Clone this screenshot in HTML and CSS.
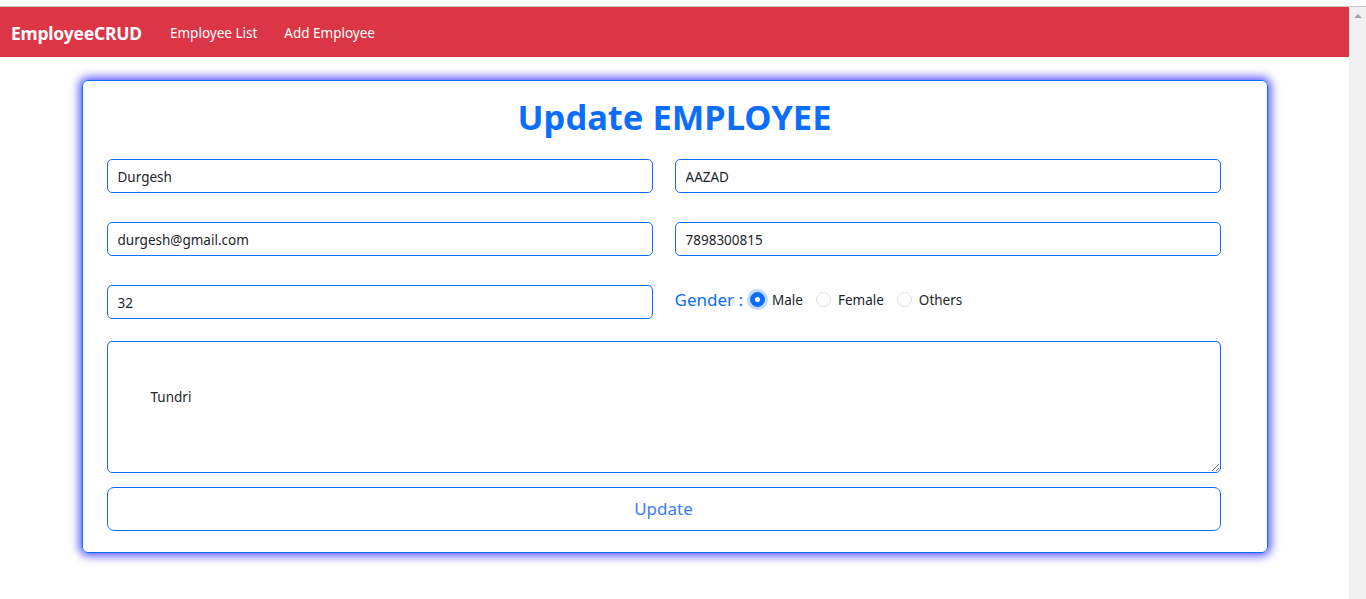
FILE: index.html
```html
<!DOCTYPE html>
<html>
<head>
<meta charset="utf-8">
<link rel="stylesheet" href="styles.css">
</head>
<body>
<div class="chrome"></div>
<div class="viewport">
  <div class="page">
    <nav class="navbar">
      <span class="brand">EmployeeCRUD</span>
      <a class="nav-link">Employee List</a>
      <a class="nav-link">Add Employee</a>
    </nav>
    <div class="card">
      <h1 class="title">Update EMPLOYEE</h1>
      <div class="grid">
        <input class="field" value="Durgesh">
        <input class="field" value="AAZAD">
        <input class="field" value="durgesh@gmail.com">
        <input class="field" value="7898300815">
        <input class="field" value="32">
        <div class="gender">
          <span class="gender-label">Gender :</span>
          <label class="opt"><span class="radio checked"></span>Male</label>
          <label class="opt"><span class="radio"></span>Female</label>
          <label class="opt"><span class="radio"></span>Others</label>
        </div>
      </div>
      <textarea class="area">Tundri</textarea>
      <button class="btn">Update</button>
    </div>
  </div>
  <div class="scrollbar"><span class="arrow"></span></div>
</div>
</body>
</html>
```
FILE: styles.css
```css
* { box-sizing: border-box; }
html, body { margin: 0; padding: 0; background: #fff; overflow: hidden; }
body { font-family: "Noto Sans", "Open Sans", sans-serif; color: #212529; height: 599px; }
.chrome { height: 7px; background: #fff; border-bottom: 1px solid #c9c9c9; }
.viewport { display: flex; height: 592px; }
.page { flex: 1; }
.scrollbar { width: 17px; background: #f0f0f0; display: flex; justify-content: center; padding-top: 7px; }
.arrow { width: 0; height: 0; border-left: 4px solid transparent; border-right: 4px solid transparent; border-bottom: 4px solid #a3a3a3; }
.navbar { height: 50px; background: #dc3545; display: flex; align-items: center; padding-left: 11px; padding-top: 2px; }
.brand { color: #fff; font-weight: 700; font-size: 17.5px; margin-right: 28px; letter-spacing: -0.2px; }
.nav-link { color: #fff; font-size: 13.5px; margin-right: 27px; }
.card { width: 1186px; margin: 23px auto 0; border: 1px solid #0d6efd; border-radius: 6px; box-shadow: 0 0 10px 3px rgba(20, 20, 255, 0.7); padding: 12px 24px 21px 24px; }
.title { margin: 0; text-align: center; color: #0d6efd; font-size: 34.5px; font-weight: 700; line-height: 48px; height: 54px; }
.grid { display: grid; grid-template-columns: 546px 546px; column-gap: 22px; row-gap: 29px; margin-top: 12px; }
.field { height: 34px; border: 1px solid #0d6efd; border-radius: 5px; font-family: inherit; font-size: 13.5px; color: #212529; padding: 2px 10px 0; outline: none; }
.gender { display: flex; align-items: center; height: 34px; padding-bottom: 5px; }
.gender-label { color: #0d6efd; font-size: 17px; margin-right: 7px; }
.opt { display: flex; align-items: center; font-size: 13.5px; margin-right: 13px; }
.radio { width: 15px; height: 15px; border-radius: 50%; border: 1px solid #dee2e6; margin-right: 7px; background: #fff; }
.radio.checked { background: #0d6efd; border-color: #0d6efd; box-shadow: 0 0 0 3px rgba(13, 110, 253, 0.25); position: relative; }
.radio.checked::after { content: ""; position: absolute; left: 4px; top: 4px; width: 5px; height: 5px; border-radius: 50%; background: #fff; }
.area { display: block; width: 1114px; height: 132px; margin-top: 22px; border: 1px solid #0d6efd; border-radius: 5px; font-family: inherit; font-size: 13.5px; color: #212529; padding: 46px 10px 10px 43px; resize: vertical; outline: none; }
.btn { display: block; width: 1114px; height: 44px; margin-top: 14px; border: 1px solid #0d6efd; border-radius: 7px; background: #fff; color: #3b7dff; font-family: inherit; font-size: 17px; padding-bottom: 2px; }
```
